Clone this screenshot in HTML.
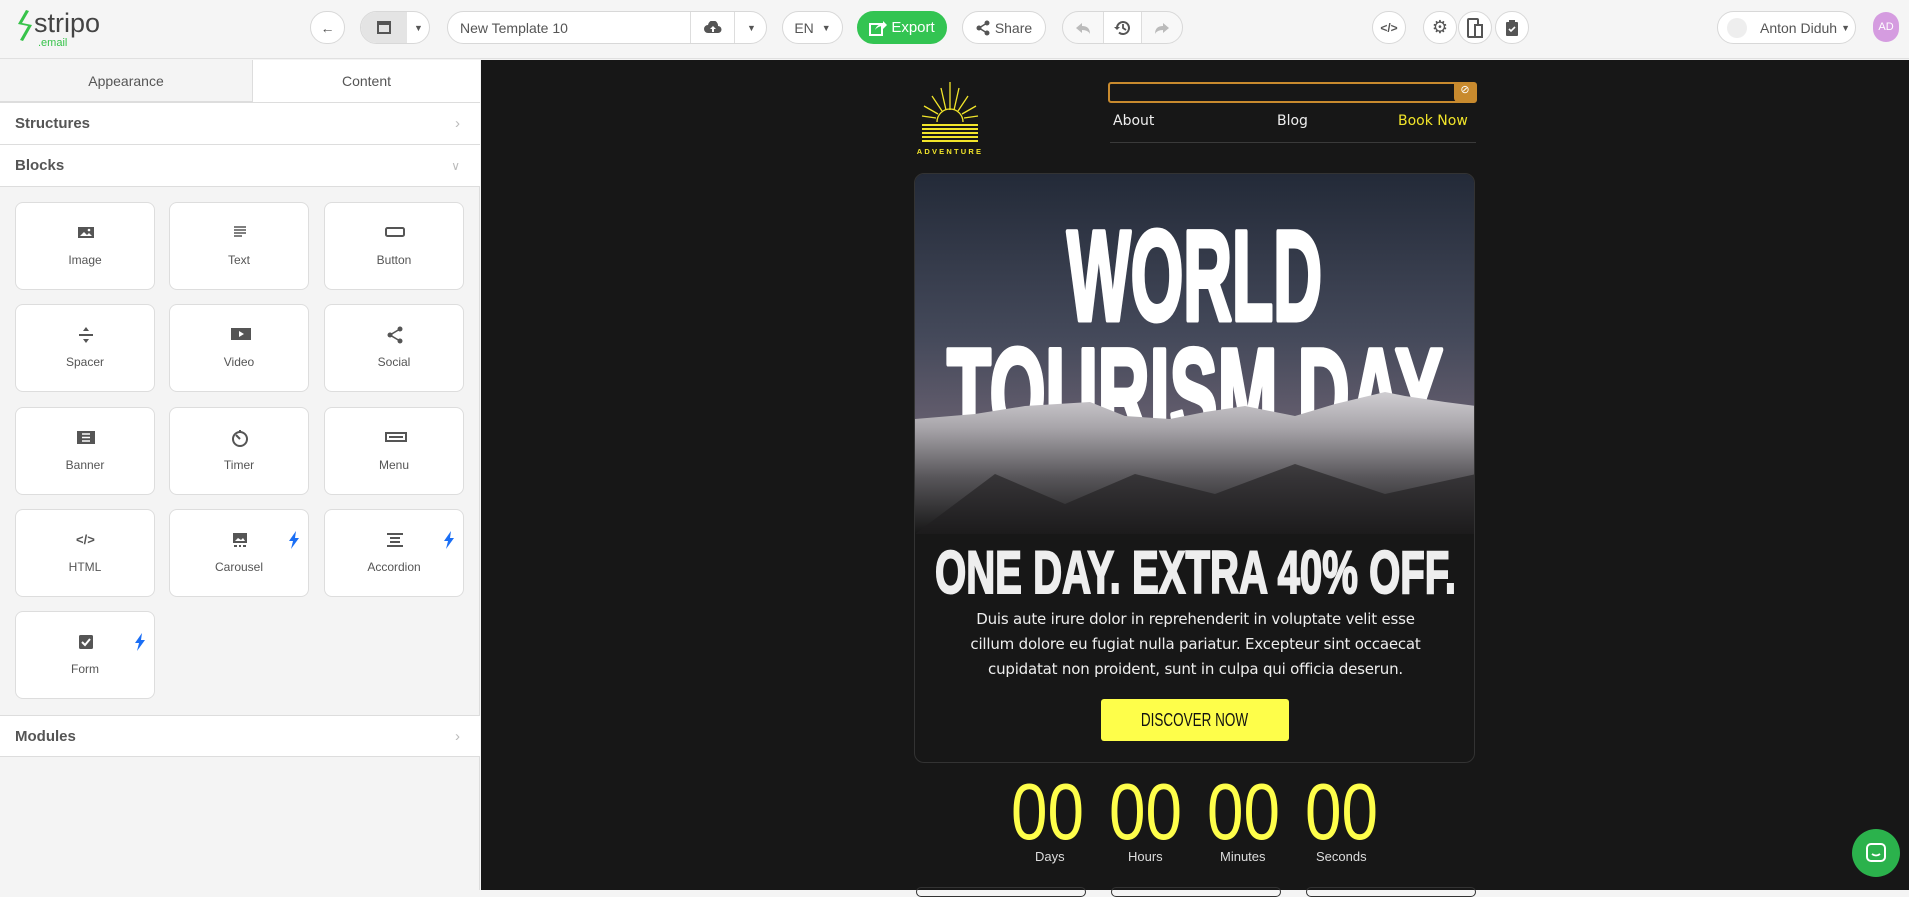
<!DOCTYPE html>
<html><head><meta charset="utf-8"><style>
*{box-sizing:border-box;margin:0;padding:0}
body{width:1909px;height:890px;overflow:hidden;background:#f4f4f4;font-family:"Liberation Sans",sans-serif;position:relative;color:#555}
.abs{position:absolute}
.top{left:0;top:0;width:1909px;height:59px;background:#f5f5f5;border-bottom:1px solid #e0e0e0}
.pill{position:absolute;top:11px;height:33px;border:1px solid #d8d8d8;background:#fff;border-radius:17px;display:flex;align-items:center;justify-content:center;font-size:14px;color:#555}
.left{left:0;top:60px;width:480px;height:830px;background:#f4f4f4;border-right:1px solid #ddd}
.tab{position:absolute;top:0;height:42px;width:253px;display:flex;align-items:center;justify-content:center;font-size:14px;color:#555}
.row{position:absolute;left:0;width:480px;background:#fff;border-bottom:1px solid #ddd;font-size:15px;font-weight:bold;color:#555;padding-left:15px;display:flex;align-items:center}
.card{position:absolute;width:140px;height:88px;background:#fff;border:1px solid #ddd;border-radius:8px;font-size:12px;color:#555;text-align:center}
.card svg{position:absolute;left:60px;top:21px}
.card span{position:absolute;left:0;right:0;top:50px}
.bolt{position:absolute;right:8px;top:8px}
.canvas{left:481px;top:60px;width:1428px;height:830px;background:#171717}
.dig{position:absolute;top:-9px;font-size:80px;color:#fefe4a;line-height:80px;transform:scaleX(.82);transform-origin:left top}
</style></head><body>
<div class="abs top">
  <svg class="abs" style="left:14px;top:8px" width="22" height="40" viewBox="0 0 22 40"><path d="M12 2 L4 16 L14 18 L6 32 L9 33 L18 17 L8 15 L15 3Z" fill="#37c34a"/></svg>
  <div class="abs" style="left:34px;top:8px;font-size:27px;color:#444">stripo</div>
  <div class="abs" style="left:38px;top:37px;font-size:11px;color:#37c34a">.email</div>
  <div class="pill" style="left:310px;width:35px">←</div>
  <div class="pill" style="left:360px;width:70px;justify-content:flex-start;padding-left:0;overflow:hidden"><div style="width:46px;height:33px;background:#e4e4e4;display:flex;align-items:center;justify-content:center"><svg width="14" height="13"><rect x="1" y="1" width="12" height="11" fill="none" stroke="#555" stroke-width="2"/><rect x="1" y="1" width="12" height="3" fill="#555"/></svg></div><span style="margin-left:7px;font-size:9px">▼</span></div>
  <div class="pill" style="left:447px;width:320px;justify-content:flex-start;padding-left:12px">New Template 10<div style="position:absolute;left:242px;top:0;bottom:0;border-left:1px solid #ddd;width:44px;display:flex;align-items:center;justify-content:center"><svg width="18" height="13"><path d="M4 12 a4 4 0 0 1 0-8 a5 5 0 0 1 10 1 a3.5 3.5 0 0 1 0 7z" fill="#555"/><path d="M9 5 l-3 3 h2 v3 h2 v-3 h2z" fill="#fff"/></svg></div><div style="position:absolute;left:286px;top:0;bottom:0;border-left:1px solid #ddd;width:34px;display:flex;align-items:center;justify-content:center;font-size:9px">▼</div></div>
  <div class="pill" style="left:782px;width:61px">EN <span style="font-size:9px;margin-left:8px">▼</span></div>
  <div class="pill" style="left:857px;width:90px;background:#33c452;border-color:#33c452;color:#fff;font-size:15px"><svg width="18" height="16" style="margin-right:4px"><rect x="1" y="4" width="12" height="11" fill="none" stroke="#fff" stroke-width="2"/><path d="M6 10 Q8 4 14 4 V1 L18 5 L14 9 V6 Q9 6 6 10z" fill="#fff"/></svg>Export</div>
  <div class="pill" style="left:962px;width:84px"><svg width="14" height="16" style="margin-right:5px"><circle cx="11" cy="3" r="2.5" fill="#555"/><circle cx="3" cy="8" r="2.5" fill="#555"/><circle cx="11" cy="13" r="2.5" fill="#555"/><path d="M11 3 L3 8 L11 13" stroke="#555" stroke-width="1.5" fill="none"/></svg>Share</div>
  <div class="pill" style="left:1062px;width:121px;background:#f8f8f8;overflow:hidden"><span style="width:40px;display:flex;justify-content:center"><svg width="16" height="14"><path d="M7 2L1 7l6 5V9q6 0 8 4q0-8-8-8z" fill="#bbb"/></svg></span><span style="border-left:1px solid #ddd;border-right:1px solid #ddd;width:40px;height:33px;display:flex;align-items:center;justify-content:center;background:#fff"><svg width="18" height="18"><path d="M4 9a6 6 0 1 1 2 4.5" fill="none" stroke="#555" stroke-width="2"/><path d="M1 8l3 3 3-3z" fill="#555"/><path d="M10 5v4l3 2" stroke="#555" stroke-width="1.8" fill="none"/></svg></span><span style="width:40px;display:flex;justify-content:center"><svg width="16" height="14"><path d="M9 2l6 5-6 5V9q-6 0-8 4q0-8 8-8z" fill="#bbb"/></svg></span></div>
  <div class="pill" style="left:1372px;width:34px;font-size:12px;font-weight:bold">&lt;/&gt;</div>
  <div class="pill" style="left:1423px;width:34px;font-size:18px">⚙</div>
  <div class="pill" style="left:1458px;width:34px"><svg width="16" height="20"><rect x="1" y="1" width="10" height="18" rx="1" fill="none" stroke="#555" stroke-width="2"/><rect x="8" y="7" width="7" height="12" fill="#fff" stroke="#555" stroke-width="2"/></svg></div>
  <div class="pill" style="left:1495px;width:34px"><svg width="14" height="18"><rect x="1" y="3" width="12" height="14" rx="1" fill="#555"/><rect x="4" y="1" width="6" height="4" fill="#555"/><path d="M4 10 l2 2 l4-4" stroke="#fff" stroke-width="1.6" fill="none"/></svg></div>
  <div class="pill" style="left:1717px;width:139px;justify-content:flex-start;padding-left:9px"><span style="width:20px;height:20px;border-radius:50%;background:#eee;margin-right:13px"></span>Anton Diduh <span style="font-size:9px;margin-left:4px">▼</span></div>
  <div class="abs" style="left:1873px;top:12px;width:26px;height:30px;border-radius:13px;background:#d59ce0;color:#fff;font-size:11px;display:flex;align-items:center;justify-content:center">AD</div>
</div>

<div class="abs left">
  <div class="tab" style="left:0;background:#f4f4f4;border-bottom:1px solid #ddd;border-right:1px solid #ddd">Appearance</div>
  <div class="tab" style="left:253px;width:227px;background:#fff">Content</div>
  <div class="row" style="top:42px;height:43px;border-top:1px solid #ddd">Structures<span style="position:absolute;right:20px;color:#bbb;font-weight:normal">›</span></div>
  <div class="row" style="top:85px;height:42px">Blocks<span style="position:absolute;right:20px;color:#bbb;font-weight:normal;font-size:12px">∨</span></div>
  <div class="row" style="top:655px;height:42px;border-top:1px solid #ddd">Modules<span style="position:absolute;right:20px;color:#bbb;font-weight:normal">›</span></div>
</div>
<!-- cards -->
<div class="card" style="left:15px;top:202px"><svg width="20" height="16"><rect x="2" y="3" width="16" height="11" fill="#555"/><path d="M4 12 l4-4 3 3 2-2 3 3z" fill="#fff"/><circle cx="13" cy="6" r="1.3" fill="#fff"/></svg><span>Image</span></div>
<div class="card" style="left:169px;top:202px"><svg width="20" height="16"><path d="M4 3h12M4 6h12M4 9h12M4 12h8" stroke="#555" stroke-width="1.6"/></svg><span>Text</span></div>
<div class="card" style="left:324px;top:202px"><svg width="20" height="16"><rect x="1" y="4" width="18" height="8" rx="1.5" fill="none" stroke="#555" stroke-width="2"/></svg><span>Button</span></div>
<div class="card" style="left:15px;top:304px"><svg width="20" height="18"><path d="M3 9h14" stroke="#555" stroke-width="2"/><path d="M10 1l-3 4h6zM10 17l-3-4h6z" fill="#555"/></svg><span>Spacer</span></div>
<div class="card" style="left:169px;top:304px"><svg width="22" height="16"><rect x="1" y="2" width="20" height="12" fill="#555"/><path d="M9 5v6l5-3z" fill="#fff"/></svg><span>Video</span></div>
<div class="card" style="left:324px;top:304px"><svg width="20" height="18"><circle cx="15" cy="3" r="2.5" fill="#555"/><circle cx="5" cy="9" r="2.5" fill="#555"/><circle cx="15" cy="15" r="2.5" fill="#555"/><path d="M15 3L5 9l10 6" stroke="#555" stroke-width="1.6" fill="none"/></svg><span>Social</span></div>
<div class="card" style="left:15px;top:407px"><svg width="20" height="16"><rect x="1" y="2" width="18" height="13" fill="#555"/><path d="M6 5h8M6 8.5h8M6 12h8" stroke="#fff" stroke-width="1.5"/></svg><span>Banner</span></div>
<div class="card" style="left:169px;top:407px"><svg width="20" height="18"><circle cx="10" cy="10" r="7" fill="none" stroke="#555" stroke-width="2"/><path d="M10 10L6 6" stroke="#555" stroke-width="2"/><path d="M10 1v3" stroke="#555" stroke-width="2"/></svg><span>Timer</span></div>
<div class="card" style="left:324px;top:407px"><svg width="22" height="16"><rect x="1" y="4" width="20" height="8" fill="none" stroke="#555" stroke-width="2"/><path d="M4 7h14v2H4z" fill="#555"/></svg><span>Menu</span></div>
<div class="card" style="left:15px;top:509px"><svg width="22" height="16"><text x="0" y="13" font-size="13" font-weight="bold" fill="#555" font-family="Liberation Sans">&lt;/&gt;</text></svg><span>HTML</span></div>
<div class="card" style="left:169px;top:509px"><svg width="20" height="18"><rect x="3" y="2" width="14" height="10" fill="#555"/><path d="M5 10l3-3 3 2 2-2 2 3z" fill="#fff"/><path d="M4 15h3M9 15h2M13 15h3" stroke="#555" stroke-width="2"/></svg><span>Carousel</span><svg class="bolt" style="left:auto" width="12" height="18"><path d="M8 0L1 10h4l-2 8 8-11H7z" fill="#1a6ef5"/></svg></div>
<div class="card" style="left:324px;top:509px"><svg width="20" height="18"><path d="M2 3h16M5 7h10M5 11h10M2 15h16" stroke="#555" stroke-width="2"/></svg><span>Accordion</span><svg class="bolt" style="left:auto" width="12" height="18"><path d="M8 0L1 10h4l-2 8 8-11H7z" fill="#1a6ef5"/></svg></div>
<div class="card" style="left:15px;top:611px"><svg width="20" height="18"><rect x="3" y="2" width="14" height="14" rx="1.5" fill="#555"/><path d="M6 9l3 3 5-6" stroke="#fff" stroke-width="2" fill="none"/></svg><span>Form</span><svg class="bolt" style="left:auto" width="12" height="18"><path d="M8 0L1 10h4l-2 8 8-11H7z" fill="#1a6ef5"/></svg></div>

<div class="abs canvas"></div>
<!-- logo -->
<svg class="abs" style="left:914px;top:80px" width="72" height="76" viewBox="0 0 72 76">
 <g stroke="#f2e52a" stroke-width="1.3" fill="none">
  <path d="M36 2v28M27 8l5 22M45 8l-5 22M18 16l10 15M54 16l-10 15M10 26l14 8M62 26l-14 8M8 36l14 2M64 36l-14 2"/>
  <path d="M23 42a13 13 0 0 1 26 0"/>
 </g>
 <g fill="#f2e52a"><rect x="8" y="44" width="56" height="2"/><rect x="8" y="48" width="56" height="2"/><rect x="8" y="52" width="56" height="2"/><rect x="8" y="56" width="56" height="2"/><rect x="8" y="60" width="56" height="2"/></g>
 <text x="36" y="74" font-size="7.5" font-weight="bold" fill="#f2e52a" text-anchor="middle" letter-spacing="2.2" font-family="Liberation Sans">ADVENTURE</text>
</svg>
<div class="abs" style="left:1108px;top:82px;width:369px;height:21px;border:2px solid #c88a2e;border-radius:3px"><div style="position:absolute;right:-1px;top:-1px;width:22px;height:19px;background:#c88a2e;border-radius:0 2px 2px 4px;color:#fff;font-size:11px;text-align:center">⊘</div></div>
<div class="abs" style="left:1113px;top:113px;font-size:14px;color:#eee;font-family:'DejaVu Sans',sans-serif">About</div>
<div class="abs" style="left:1277px;top:113px;font-size:14px;color:#eee;font-family:'DejaVu Sans',sans-serif">Blog</div>
<div class="abs" style="left:1398px;top:113px;font-size:14px;color:#f2e52a;font-family:'DejaVu Sans',sans-serif">Book Now</div>
<div class="abs" style="left:1110px;top:142px;width:366px;height:1px;background:#3a3a3a"></div>

<!-- card -->
<div class="abs" style="left:914px;top:173px;width:561px;height:590px;border:1px solid #333;border-radius:10px;overflow:hidden;background:#171717">
 <svg width="561" height="360" viewBox="0 0 561 360" style="display:block">
  <defs>
   <linearGradient id="sky" x1="0" y1="0" x2="0" y2="1"><stop offset="0" stop-color="#232a38"/><stop offset=".45" stop-color="#44495a"/><stop offset=".75" stop-color="#6b6272"/><stop offset="1" stop-color="#5a5660"/></linearGradient>
   <linearGradient id="mt" x1="0" y1="0" x2="0" y2="1"><stop offset="0" stop-color="#d0ced2"/><stop offset=".25" stop-color="#a8a5aa"/><stop offset=".6" stop-color="#58565a"/><stop offset="1" stop-color="#171717"/></linearGradient>
  </defs>
  <rect width="561" height="360" fill="url(#sky)"/>
  <g fill="#fff" stroke="#fff" stroke-width="5" stroke-linejoin="round" font-family="'Liberation Sans',sans-serif" font-weight="bold">
   <text x="152" y="146" font-size="128" textLength="255" lengthAdjust="spacingAndGlyphs">WORLD</text>
   <text x="32" y="264" font-size="128" textLength="496" lengthAdjust="spacingAndGlyphs">TOURISM DAY</text>
  </g>
  <path d="M0 245 L60 240 L110 232 L175 228 L210 242 L255 245 L290 238 L330 232 L380 242 L420 230 L470 218 L490 222 L530 228 L561 232 L561 360 L0 360Z" fill="url(#mt)"/>
  <path d="M0 360 L80 300 L150 330 L220 300 L300 320 L380 290 L470 320 L561 300 L561 360Z" fill="#1f1e20" opacity=".6"/>
 </svg>
 <svg class="abs" style="left:0;top:360px" width="561" height="70"><text x="20" y="59" font-size="60" fill="#eee" stroke="#eee" stroke-width="2" font-weight="bold" font-family="'Liberation Sans',sans-serif" textLength="521" lengthAdjust="spacingAndGlyphs">ONE DAY. EXTRA 40% OFF.</text></svg>
 <div class="abs" style="left:0;width:561px;top:433px;text-align:center;color:#eee;font-size:15px;line-height:25px;font-family:'DejaVu Sans',sans-serif;letter-spacing:-0.2px">Duis aute irure dolor in reprehenderit in voluptate velit esse<br>cillum dolore eu fugiat nulla pariatur. Excepteur sint occaecat<br>cupidatat non proident, sunt in culpa qui officia deserun.</div>
 <div class="abs" style="left:186px;top:525px;width:188px;height:42px;background:#fefe4a;border-radius:3px;display:flex;align-items:center;justify-content:center;color:#111;font-size:18px"><span style="display:inline-block;transform:scaleX(.75)">DISCOVER NOW</span></div>
</div>
<!-- countdown -->
<div class="abs" style="left:1000px;top:781px;width:400px">
 <div class="dig" style="left:11px">00</div>
 <div class="dig" style="left:109px">00</div>
 <div class="dig" style="left:207px">00</div>
 <div class="dig" style="left:305px">00</div>
 <div class="abs" style="left:35px;top:68px;font-size:13px;color:#ddd">Days</div>
 <div class="abs" style="left:128px;top:68px;font-size:13px;color:#ddd">Hours</div>
 <div class="abs" style="left:220px;top:68px;font-size:13px;color:#ddd">Minutes</div>
 <div class="abs" style="left:316px;top:68px;font-size:13px;color:#ddd">Seconds</div>
</div>
<div class="abs" style="left:916px;top:887px;width:170px;height:10px;border:1px solid #333;border-radius:5px"></div>
<div class="abs" style="left:1111px;top:887px;width:170px;height:10px;border:1px solid #333;border-radius:5px"></div>
<div class="abs" style="left:1306px;top:887px;width:170px;height:10px;border:1px solid #333;border-radius:5px"></div>
<div class="abs" style="left:1852px;top:829px;width:48px;height:48px;border-radius:50%;background:#2bb24c;display:flex;align-items:center;justify-content:center"><svg width="22" height="22"><rect x="2" y="2" width="18" height="17" rx="4" fill="none" stroke="#fff" stroke-width="2"/><path d="M7 12q4 3 8 0" stroke="#fff" stroke-width="1.8" fill="none"/></svg></div>
</body></html>
